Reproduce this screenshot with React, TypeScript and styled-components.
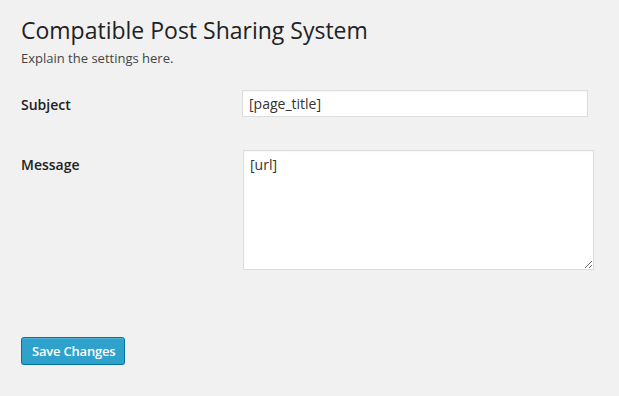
import React from 'react';
import styled, { createGlobalStyle } from 'styled-components';

const GlobalStyle = createGlobalStyle`
  html, body {
    margin: 0;
    padding: 0;
    background: #f1f1f1;
  }
  body {
    font-family: "Open Sans", "Liberation Sans", sans-serif;
    color: #444;
  }
`;

const Wrap = styled.div`
  padding: 16px 21px 0 21px;
`;

const Title = styled.h2`
  margin: 0;
  font-size: 23px;
  font-weight: 400;
  line-height: 29px;
  color: #222;
`;

const Description = styled.p`
  margin: 4px 0 0 0;
  font-size: 13px;
  line-height: 1.5;
  color: #444;
`;

const FormTable = styled.div`
  display: grid;
  grid-template-columns: 221px 1fr;
  margin-top: 21px;
`;

const Label = styled.label`
  font-size: 14px;
  font-weight: 600;
  line-height: 24px;
  color: #222;
  padding-top: 3px;
`;

const Field = styled.div<{ $bottom: number }>`
  padding-bottom: ${p => p.$bottom}px;
`;

const TextInput = styled.input`
  box-sizing: border-box;
  display: block;
  width: 346px;
  height: 27px;
  margin: 0;
  padding: 3px 6px;
  border: 1px solid #ddd;
  background: #fff;
  font-family: inherit;
  font-size: 14px;
  color: #333;
  outline: none;
  box-shadow: inset 0 1px 2px rgba(0, 0, 0, 0.04);
`;

const TextArea = styled.textarea`
  box-sizing: border-box;
  display: block;
  width: 351px;
  height: 120px;
  margin: 0 0 0 1px;
  padding: 4px 6px;
  border: 1px solid #ddd;
  background: #fff;
  font-family: inherit;
  font-size: 14px;
  line-height: 20px;
  color: #333;
  outline: none;
  box-shadow: inset 0 1px 2px rgba(0, 0, 0, 0.04);
`;

const Submit = styled.div`
  margin-top: 67px;
`;

const Button = styled.button`
  box-sizing: border-box;
  height: 28px;
  padding: 0 9px 1px 10px;
  border: 1px solid #0074a2;
  border-radius: 3px;
  background: #2ea2cc;
  box-shadow: inset 0 1px 0 rgba(120, 200, 230, 0.5), 0 1px 0 rgba(0, 0, 0, 0.15);
  color: #fff;
  font-family: inherit;
  font-size: 13px;
  font-weight: 600;
  letter-spacing: -0.2px;
  line-height: 26px;
  cursor: pointer;
`;

export default function App() {
  return (
    <Wrap>
      <GlobalStyle />
      <Title>Compatible Post Sharing System</Title>
      <Description>Explain the settings here.</Description>
      <FormTable>
        <Label htmlFor="subject">Subject</Label>
        <Field $bottom={33}>
          <TextInput id="subject" defaultValue="[page_title]" />
        </Field>
        <Label htmlFor="message">Message</Label>
        <Field $bottom={0}>
          <TextArea id="message" defaultValue="[url]" />
        </Field>
      </FormTable>
      <Submit>
        <Button type="button">Save Changes</Button>
      </Submit>
    </Wrap>
  );
}
